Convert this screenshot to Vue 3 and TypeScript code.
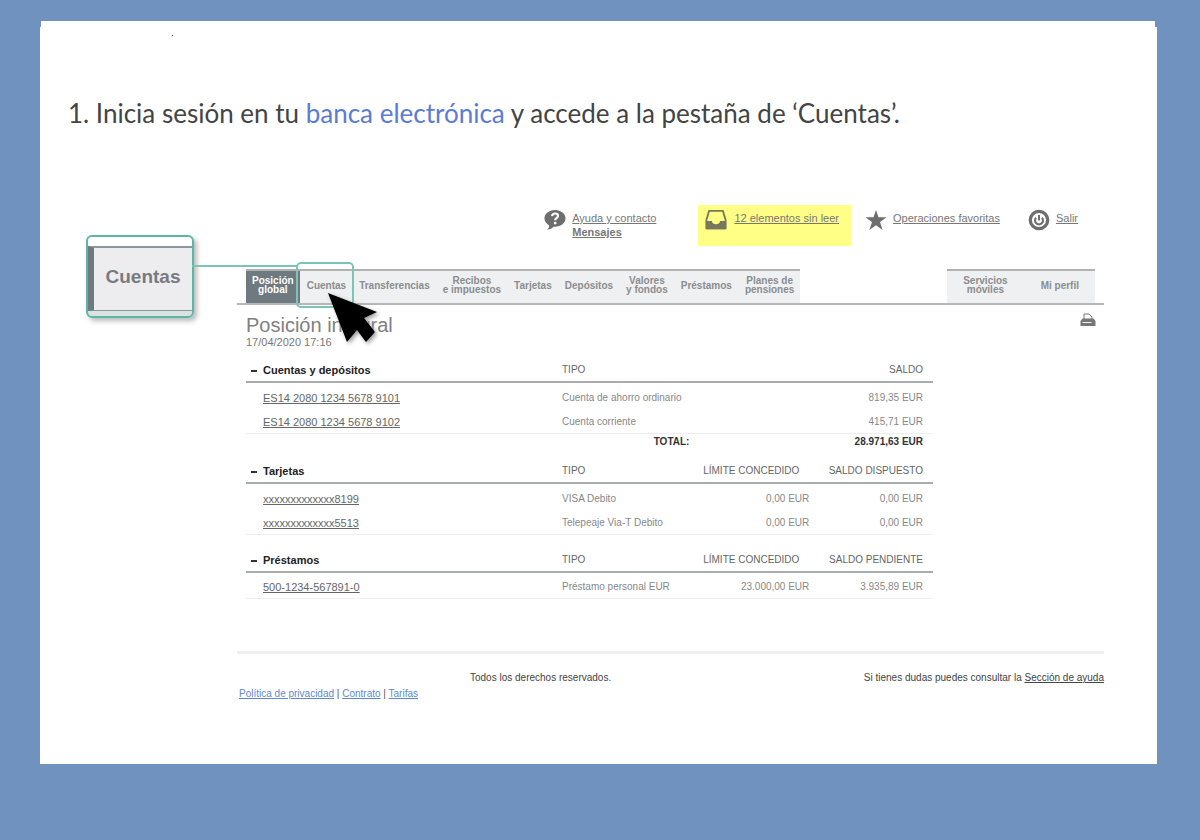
<script setup lang="ts">
interface Tab {
  lines: string[]
  state?: 'active' | 'marked'
}
interface Row {
  id: string
  tipo: string
  limite: string
  saldo: string
}
interface Section {
  title: string
  limite: string
  saldo: string
  rows: Row[]
  total?: string
}

const tabs: Tab[] = [
  { lines: ['Posición', 'global'], state: 'active' },
  { lines: ['Cuentas'], state: 'marked' },
  { lines: ['Transferencias'] },
  { lines: ['Recibos', 'e impuestos'] },
  { lines: ['Tarjetas'] },
  { lines: ['Depósitos'] },
  { lines: ['Valores', 'y fondos'] },
  { lines: ['Préstamos'] },
  { lines: ['Planes de', 'pensiones'] },
]
const sideTabs: Tab[] = [{ lines: ['Servicios', 'móviles'] }, { lines: ['Mi perfil'] }]

const sections: Section[] = [
  {
    title: 'Cuentas y depósitos',
    limite: '',
    saldo: 'SALDO',
    rows: [
      { id: 'ES14 2080 1234 5678 9101', tipo: 'Cuenta de ahorro ordinario', limite: '', saldo: '819,35 EUR' },
      { id: 'ES14 2080 1234 5678 9102', tipo: 'Cuenta corriente', limite: '', saldo: '415,71 EUR' },
    ],
    total: '28.971,63 EUR',
  },
  {
    title: 'Tarjetas',
    limite: 'LÍMITE CONCEDIDO',
    saldo: 'SALDO DISPUESTO',
    rows: [
      { id: 'xxxxxxxxxxxxx8199', tipo: 'VISA Debito', limite: '0,00 EUR', saldo: '0,00 EUR' },
      { id: 'xxxxxxxxxxxxx5513', tipo: 'Telepeaje Via-T Debito', limite: '0,00 EUR', saldo: '0,00 EUR' },
    ],
  },
  {
    title: 'Préstamos',
    limite: 'LÍMITE CONCEDIDO',
    saldo: 'SALDO PENDIENTE',
    rows: [{ id: '500-1234-567891-0', tipo: 'Préstamo personal EUR', limite: '23.000,00 EUR', saldo: '3.935,89 EUR' }],
  },
]
</script>

<template>
  <main class="page">
    <div class="lip"></div>
    <article class="card">
      <p class="mark">.</p>
      <h1 class="step">
        1. Inicia sesión en tu <a href="#banca">banca electrónica</a> y accede a la pestaña de ‘Cuentas’.
      </h1>

      <div class="figure">
        <aside class="callout">
          <div class="callout-tab">Cuentas</div>
        </aside>

        <section class="bank">
          <div class="tools">
            <div class="tool">
              <svg class="icon" viewBox="0 0 24 24" aria-hidden="true">
                <path fill="#6e6e6e" d="M12 1C5.400 1 .5 5 .5 10.200c0 3.300 2 6.100 5.200 7.700-.1 2-.9 3.400-2.200 4.600 3.100-.2 5.500-1.500 7-3.200l1.500.1c6.600 0 11.500-4 11.500-9.200S18.600 1 12 1z" />
                <path fill="none" stroke="#fff" stroke-width="2.400" d="M8.800 7.800c.2-1.900 1.500-2.900 3.300-2.900 1.900 0 3.200 1 3.200 2.600 0 2.400-3.100 2.200-3.100 4.900" />
                <circle cx="12.200" cy="15.300" r="1.500" fill="#fff" />
              </svg>
              <div class="stack">
                <a href="#ayuda">Ayuda y contacto</a>
                <a href="#mensajes" class="strong">Mensajes</a>
              </div>
            </div>
            <div class="tool unread">
              <svg class="icon" viewBox="0 0 24 24" aria-hidden="true">
                <path fill="none" stroke="#77775c" stroke-width="2" stroke-linejoin="round" d="M4.500 2h15L22.500 12v9h-21v-9z" />
                <path fill="#77775c" d="M1 13h6.500c.3 2.300 2 3.600 4.500 3.600s4.200-1.300 4.500-3.600H23v9H1z" />
              </svg>
              <a href="#mensajes">12 elementos sin leer</a>
            </div>
            <div class="tool">
              <svg class="icon" viewBox="0 0 24 24" aria-hidden="true">
                <path fill="#6e6e6e" d="M12 1l2.700 8.100h8.800l-7.100 5.200 2.800 8.700-7.200-5.300L4.800 23l2.800-8.700L.5 9.100h8.800z" />
              </svg>
              <a href="#favoritas">Operaciones favoritas</a>
            </div>
            <div class="tool exit">
              <svg class="icon" viewBox="0 0 24 24" aria-hidden="true">
                <circle cx="12" cy="12" r="9.500" fill="none" stroke="#6e6e6e" stroke-width="3.600" />
                <path fill="none" stroke="#6e6e6e" stroke-width="2.400" d="M8.800 9.500a4.300 4.300 0 1 0 6.400 0" />
                <path stroke="#6e6e6e" stroke-width="2.200" d="M12 6.500v6" />
              </svg>
              <a href="#salir">Salir</a>
            </div>
          </div>

          <nav class="bar">
            <ul class="tabs">
              <li v-for="tab in tabs" :key="tab.lines[0]" :class="tab.state">
                <a href="#tab"><span v-for="line in tab.lines" :key="line">{{ line }}</span></a>
                <svg v-if="tab.state === 'marked'" class="pointer" viewBox="0 0 52 50" aria-hidden="true">
                  <path d="M1 1l49 19-13 6 11 14-9 10-9-12-10 12z" />
                </svg>
              </li>
            </ul>
            <ul class="tabs side">
              <li v-for="tab in sideTabs" :key="tab.lines[0]">
                <a href="#tab"><span v-for="line in tab.lines" :key="line">{{ line }}</span></a>
              </li>
            </ul>
          </nav>

          <header class="heading">
            <div>
              <h2>Posición integral</h2>
              <p>17/04/2020 17:16</p>
            </div>
            <button type="button" class="print" aria-label="Imprimir">
              <svg viewBox="0 0 16 14" aria-hidden="true">
                <path fill="#fff" stroke="#777" d="M4 7V1h5l3 3v3" />
                <path fill="#777" d="M2.500 5.500h11L15.500 8v5H.5V8z" />
                <path stroke="#eee" d="M2.500 9.500h9" />
              </svg>
            </button>
          </header>

          <table v-for="section in sections" :key="section.title" class="accounts">
            <colgroup>
              <col class="c-id" />
              <col class="c-type" />
              <col class="c-limit" />
              <col class="c-balance" />
            </colgroup>
            <thead>
              <tr>
                <th class="name"><i class="dash"></i>{{ section.title }}</th>
                <th>TIPO</th>
                <th class="num">{{ section.limite }}</th>
                <th class="num">{{ section.saldo }}</th>
              </tr>
            </thead>
            <tbody>
              <tr v-for="row in section.rows" :key="row.id">
                <td class="id"><a href="#detalle">{{ row.id }}</a></td>
                <td>{{ row.tipo }}</td>
                <td class="num">{{ row.limite }}</td>
                <td class="num last">{{ row.saldo }}</td>
              </tr>
            </tbody>
            <tfoot v-if="section.total">
              <tr>
                <td></td>
                <th class="num">TOTAL:</th>
                <td></td>
                <td class="num last">{{ section.total }}</td>
              </tr>
            </tfoot>
          </table>

          <footer class="foot">
            <div class="legal">
              <a href="#privacidad">Política de privacidad</a> | <a href="#contrato">Contrato</a> |
              <a href="#tarifas">Tarifas</a>
            </div>
            <p>Todos los derechos reservados.</p>
            <p>Si tienes dudas puedes consultar la <a href="#ayuda">Sección de ayuda</a></p>
          </footer>
        </section>
      </div>
    </article>
  </main>
</template>

<style>
body {
  margin: 0;
  background: #7092be;
}
</style>

<style scoped>
.page {
  padding: 21px 43px 76px 40px;
  font-family: 'Liberation Sans', Arial, sans-serif;
  font-size: 10px;
  color: #777;
}
.page * {
  box-sizing: border-box;
}
h1,
h2,
p,
ul {
  margin: 0;
  padding: 0;
}
.lip {
  height: 6px;
  margin: 0 2px 0 1px;
  background: #fff;
}
.card {
  background: #fff;
  padding-bottom: 63px;
}
.mark {
  padding-left: 131px;
  line-height: 12px;
  color: #222;
}
.step {
  padding: 56px 0 0 28px;
  font: 400 26px/36px Lato, sans-serif;
  color: #444;
}
.step a {
  color: #5b7bd5;
  text-decoration: none;
}
.figure {
  display: flex;
  align-items: flex-start;
  gap: 43px;
  padding: 74px 53px 0 46px;
}

/* Enlarged tab with its connector */
.callout {
  position: relative;
  flex: none;
  width: 108px;
  margin-top: 30px;
  padding: 9px 0 5px;
  border: 2px solid #5fb5a5;
  border-radius: 6px;
  background: linear-gradient(#fff 50%, #d9e3e3 50%);
  box-shadow: 3px 3px 5px #bbb;
}
.callout::after {
  content: '';
  position: absolute;
  left: 100%;
  top: 28px;
  width: 106px;
  height: 2px;
  background: #7cc4b5;
}
.callout-tab {
  border: solid #8e9699;
  border-width: 2px 0 1px 6px;
  border-left-color: #6f7a80;
  background: #ededef;
  font: bold 19px/58px 'Liberation Sans', Arial, sans-serif;
  padding-bottom: 4px;
  text-align: center;
  color: #777b80;
}

.bank {
  flex: 1;
  min-width: 0;
}
.bank a {
  color: inherit;
}
.tools {
  display: flex;
  justify-content: flex-end;
  padding-right: 26px;
  font-size: 11px;
  line-height: 14px;
}
.tool {
  display: flex;
  align-items: flex-start;
  gap: 6px;
  height: 41px;
  padding-top: 6px;
  white-space: nowrap;
}
.icon {
  flex: none;
  width: 22px;
  height: 22px;
  margin-top: -2px;
}
.stack {
  display: flex;
  flex-direction: column;
}
.strong {
  font-weight: bold;
}
.unread {
  gap: 7px;
  margin: 0 14px 0 42px;
  padding-left: 7px;
  padding-right: 12px;
  background: #ffff85;
}
.exit {
  margin-left: 28px;
}

.bar {
  display: flex;
  justify-content: space-between;
  margin-top: 23px;
  padding: 0 9px;
  border-bottom: 2px solid #b5b8b8;
}
.tabs {
  display: flex;
  gap: 1px;
  list-style: none;
  border-top: 2px solid #b0b2b2;
  background: #eff0f1;
  font-weight: bold;
  line-height: 9px;
  color: #8a8d8f;
}
.tabs li {
  position: relative;
  display: flex;
}
.tabs a {
  display: flex;
  flex-direction: column;
  justify-content: center;
  height: 32px;
  padding: 0 6px 4px;
  text-align: center;
  text-decoration: none;
  white-space: nowrap;
}
.side a {
  padding: 0 16px 4px;
}
.active {
  background: #6f7a80;
  color: #fff;
}
.marked::before {
  content: '';
  position: absolute;
  inset: -9px -2px -5px -5px;
  border: 2px solid #7cc4b5;
  border-radius: 5px;
}
.pointer {
  position: absolute;
  z-index: 1;
  left: 26px;
  top: 21px;
  width: 52px;
  height: 50px;
  fill: #000;
  filter: drop-shadow(2px 2px 2px #999);
}

.heading {
  display: flex;
  justify-content: space-between;
  align-items: flex-start;
  padding: 8px 8px 11px 9px;
}
.heading h2 {
  font-weight: 400;
  font-size: 20px;
  line-height: 24px;
  color: #808080;
}
.heading p {
  font-size: 11px;
  line-height: 11px;
}
.print {
  width: 16px;
  height: 14px;
  padding: 0;
  border: 0;
  background: none;
}
.print svg {
  display: block;
}

.accounts {
  width: calc(100% - 180px);
  margin: 0 0 10px 9px;
  table-layout: fixed;
  border-collapse: collapse;
  line-height: 12px;
}
.accounts + .accounts {
  margin-bottom: 14px;
}
.c-id {
  width: 46%;
}
.c-type {
  width: 20%;
}
.c-limit {
  width: 16%;
}
.c-balance {
  width: 18%;
}
th,
td {
  padding: 0;
  text-align: left;
  font-weight: 400;
  white-space: nowrap;
}
thead th {
  height: 23px;
  border-bottom: 2px solid #aaadad;
  color: #666;
}
thead .name {
  padding-left: 5px;
  font-weight: bold;
  font-size: 11px;
  color: #222;
}
.dash {
  display: inline-block;
  width: 6px;
  height: 2px;
  margin: 0 6px 2px 0;
  background: #333;
}
tbody td {
  height: 24px;
  padding-top: 3px;
  color: #888;
}
tbody tr:first-child td {
  height: 27px;
}
tbody tr:last-child td {
  border-bottom: 1px solid #eee;
}
tbody .id {
  padding-left: 17px;
  font-size: 11px;
  color: #666;
}
.accounts .num {
  text-align: right;
}
thead .num,
tfoot .num,
.accounts .last {
  padding-right: 10px;
}
tfoot td,
tfoot th {
  height: 17px;
  font-weight: bold;
  color: #333;
}

.foot {
  display: grid;
  grid-template-columns: 233px 1fr auto;
  margin-top: 52px;
  padding-top: 17px;
  border-top: 3px solid #efefef;
  line-height: 14px;
  color: #444;
}
.legal {
  padding: 16px 0 0 2px;
  color: #555;
}
.legal a {
  color: #6088cf;
}
</style>
